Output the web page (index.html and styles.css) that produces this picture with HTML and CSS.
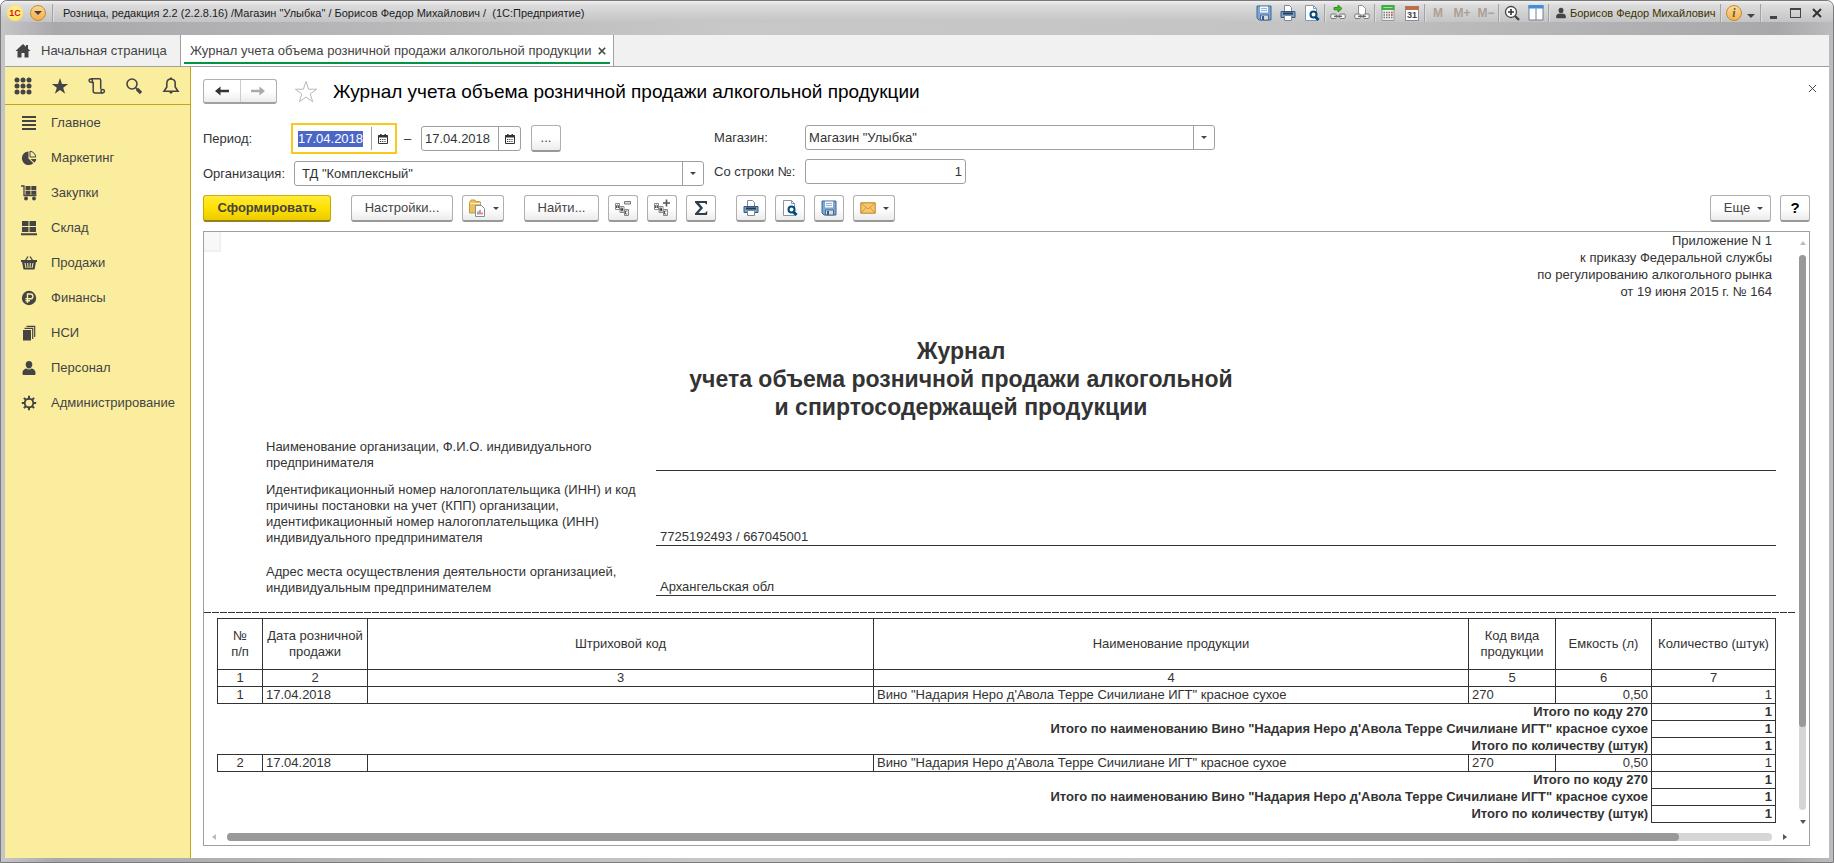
FILE: index.html
```html
<!DOCTYPE html>
<html lang="ru">
<head>
  <meta charset="UTF-8" />
  <meta name="viewport" content="width=device-width, initial-scale=1.0" />
  <title>Розница, редакция 2.2</title>
  <link rel="stylesheet" href="styles.css">
</head>
<body>
  <svg class="sprite" aria-hidden="true">
    <symbol id="i-save" viewBox="0 0 16 16">
      <path d="M1 1h14v14H3l-2-2z" fill="#7ba6d6" stroke="#41688f"/>
      <path d="M4 1.500h8v6H4z" fill="#f4f8fc"/>
      <path d="M5 3.500h6M5 5.500h6" stroke="#9ab4ce"/>
      <path d="M4.500 10h8v5h-8z" fill="#d9dcdf" stroke="#4a6a8c"/>
      <path d="M6 11h2v4H6z" fill="#2f5f92"/>
    </symbol>
    <symbol id="i-print" viewBox="0 0 16 16">
      <path d="M4.500 7V.5h5l2 2V7" fill="#fff" stroke="#7b8a9a"/>
      <path d="M1 6.500h14v6H1z" fill="#7fa3c8" stroke="#35587d"/>
      <path d="M3 8.500h10" stroke="#1d3d60" stroke-width="2"/>
      <path d="M4.500 10.500h7v5h-7z" fill="#fff" stroke="#7b8a9a"/>
    </symbol>
    <symbol id="i-preview" viewBox="0 0 16 16">
      <path d="M1.500.5h8l3 3v12h-11z" fill="#fff" stroke="#8796a5"/>
      <path d="M9.500.5v3h3" fill="none" stroke="#8796a5"/>
      <circle cx="9.500" cy="9.500" r="3" fill="#fff" stroke="#004b7c" stroke-width="2"/>
      <path d="M11.500 12l3 3" stroke="#004b7c" stroke-width="3"/>
    </symbol>
    <symbol id="i-link-in" viewBox="0 0 16 16">
      <path d="M4 2.500h4V0l4 3.500L8 7V4.800H4z" fill="#3fc01d" stroke="#1f7d12" stroke-width=".8"/>
      <rect x=".8" y="9" width="5.500" height="4.500" rx="1" fill="#f4f4f4" stroke="#777"/>
      <rect x="9.700" y="9" width="5.500" height="4.500" rx="1" fill="#f4f4f4" stroke="#777"/>
      <path d="M4 11.300h8" stroke="#666" stroke-width="1.300"/>
    </symbol>
    <symbol id="i-link" viewBox="0 0 16 16">
      <path d="M4.500 9V.5h4l3 3V9" fill="#fff" stroke="#8d8d8d"/>
      <rect x=".8" y="9" width="5.500" height="4.500" rx="1" fill="#f4f4f4" stroke="#777"/>
      <rect x="9.700" y="9" width="5.500" height="4.500" rx="1" fill="#f4f4f4" stroke="#777"/>
      <path d="M4 11.300h8" stroke="#666" stroke-width="1.300"/>
    </symbol>
    <symbol id="i-calc" viewBox="0 0 16 16">
      <path d="M2 .5h12v15H2z" fill="#eee" stroke="#999"/>
      <path d="M1.500 0h13v5h-13z" fill="#3fae49"/>
      <path d="M3.500 2.500h9" stroke="#9be09f"/>
      <path d="M3.500 7.500h9M3.500 10h9M3.500 12.500h9" stroke="#777" stroke-width="1.500" stroke-dasharray="1.500 1"/>
      <path d="M11 6.700h1.500v1.500H11zM11 9.200h1.500v1.500H11z" fill="#f04b4c"/>
    </symbol>
    <symbol id="i-zoom" viewBox="0 0 16 16">
      <circle cx="7" cy="7" r="5.500" fill="#fff" stroke="#444" stroke-width="1.300"/>
      <path d="M4 7h6M7 4v6" stroke="#333" stroke-width="1.600"/>
      <path d="M11 11l4 4" stroke="#444" stroke-width="2.400"/>
    </symbol>
    <symbol id="i-panels" viewBox="0 0 16 16">
      <path d="M1 .5h14v14.500H1z" fill="#fff" stroke="#6f7f90"/>
      <path d="M.5 0h15v3.500H.5z" fill="#3f8fdc"/>
      <path d="M8 3.500V15" stroke="#6f7f90"/>
    </symbol>
    <symbol id="i-user" viewBox="0 0 16 16">
      <path d="M8 1c2.200 0 3.300 1.500 3.300 3.500S10 8.500 8 8.500 4.700 6.500 4.700 4.500 5.800 1 8 1z"/>
      <path d="M5.500 8.500c1.500 1.300 3.500 1.300 5 0 2.500.6 4 1.800 4 4.300V14q0 1-1 1h-11q-1 0-1-1v-1.200c0-2.500 1.500-3.700 4-4.300z"/>
    </symbol>
    <symbol id="i-home" viewBox="0 0 16 16">
      <path d="M8 1L.5 8h2v6.500h4V10h3v4.500h4V8h2L13 5.700V2h-2v1.800z"/>
    </symbol>
    <symbol id="i-grid" viewBox="0 0 18 18">
      <circle cx="3" cy="3" r="2.500"/><circle cx="9" cy="3" r="2.500"/><circle cx="15" cy="3" r="2.500"/>
      <circle cx="3" cy="9" r="2.500"/><circle cx="9" cy="9" r="2.500"/><circle cx="15" cy="9" r="2.500"/>
      <circle cx="3" cy="15" r="2.500"/><circle cx="9" cy="15" r="2.500"/><circle cx="15" cy="15" r="2.500"/>
    </symbol>
    <symbol id="i-star" viewBox="0 0 18 18">
      <path d="M9 1l2 6h6.200l-5 3.700 1.900 6.100L9 13l-5.100 3.800 1.900-6.100-5-3.700H7z"/>
    </symbol>
    <symbol id="i-scroll" viewBox="0 0 18 18">
      <g fill="none" stroke="currentColor" stroke-width="1.500">
        <path d="M3 1.700h8.200q1.500 0 1.500 1.500v9"/>
        <path d="M3.500 5.500h1.700V14q0 2 2 2h7.500"/>
        <circle cx="2.800" cy="3.600" r="1.700"/><circle cx="14.700" cy="14.200" r="1.700"/>
      </g>
    </symbol>
    <symbol id="i-search" viewBox="0 0 18 18">
      <circle cx="7" cy="7" r="5" fill="none" stroke="currentColor" stroke-width="1.600"/>
      <path d="M10.500 10.500l2 2" stroke="currentColor" stroke-width="1.600"/>
      <path d="M12 12l4 4" stroke="currentColor" stroke-width="3.200"/>
    </symbol>
    <symbol id="i-bell" viewBox="0 0 18 18">
      <path d="M9 2c-3 0-4.200 2-4.200 4.500v3.500L2 14.200h14L13.200 10V6.500C13.200 4 12 2 9 2z" fill="none" stroke="currentColor" stroke-width="1.600"/>
      <path d="M8 .5h2v2H8zM7 15h4l-2 2z"/>
    </symbol>
    <symbol id="i-lines" viewBox="0 0 16 16">
      <path d="M1 1h14v2H1zM1 5h14v2H1zM1 9h14v2H1zM1 13h14v2H1z"/>
    </symbol>
    <symbol id="i-pie" viewBox="0 0 16 16">
      <path d="M7.500 1.500V8.500l4.800 4.800A6.800 6.800 0 1 1 7.500 1.500z"/>
      <path d="M9 1.300a6 6 0 0 1 5.700 5.700H9z" fill="none" stroke="currentColor"/>
      <path d="M9.500 9h5.800a6 6 0 0 1-2 3.800z"/>
    </symbol>
    <symbol id="i-cart" viewBox="0 0 16 16">
      <path d="M0 1h3v9.500h12.500" fill="none" stroke="currentColor" stroke-width="1.300"/>
      <path d="M4.500 1h5v4h-5zM10.300 1h5v4h-5zM4.500 5.800h5v4h-5zM10.300 5.800h5v4h-5z"/>
      <circle cx="5" cy="13.500" r="1.900"/><circle cx="13" cy="13.500" r="1.900"/>
    </symbol>
    <symbol id="i-stock" viewBox="0 0 16 16">
      <path d="M1 1h6.500v5H1zM8.500 1H15v5H8.500zM1 7h6.500v5H1zM8.500 7H15v5H8.500zM0 13.300h16v1.900H0z"/>
    </symbol>
    <symbol id="i-basket" viewBox="0 0 16 16">
      <path d="M4 6l3-4.500M12 6L9 1.500" stroke="currentColor" stroke-width="1.300"/>
      <path d="M0 5h16v2h-1l-1.500 7.500h-11L1 7H0z"/>
      <path d="M4 8l1 5M6.700 8l.3 5M9.300 8L9 13M12 8l-1 5" stroke="#fbed9e"/>
    </symbol>
    <symbol id="i-ruble" viewBox="0 0 16 16">
      <circle cx="8" cy="8" r="7.200"/>
      <path d="M6.500 13V4h3a2.300 2.300 0 0 1 0 4.800H4.500M4.500 10.800H9" fill="none" stroke="#fbed9e" stroke-width="1.400"/>
    </symbol>
    <symbol id="i-stack" viewBox="0 0 16 16">
      <path d="M2 5h8v10.500H2z"/>
      <path d="M3.500 3.300h8.200V14M5.500 1.300h8.200V12" fill="none" stroke="currentColor" stroke-width="1.200"/>
    </symbol>
    <symbol id="i-gear" viewBox="0 0 16 16">
      <circle cx="8" cy="8" r="4.300" fill="none" stroke="currentColor" stroke-width="1.900"/>
      <path d="M8 .8v3M8 12.200v3M.8 8h3M12.200 8h3M2.900 2.900L5 5M11 11l2.100 2.100M13.100 2.900L11 5M5 11l-2.100 2.100" stroke="currentColor" stroke-width="2"/>
    </symbol>
    <symbol id="i-left" viewBox="0 0 16 16">
      <path d="M1 8l5.500-4.500v3.200H15v2.600H6.500v3.200z"/>
    </symbol>
    <symbol id="i-right" viewBox="0 0 16 16">
      <path d="M15 8L9.500 3.500v3.200H1v2.600h8.500v3.200z"/>
    </symbol>
    <symbol id="i-fav" viewBox="0 0 24 24">
      <path d="M12 1.500l2.600 7.700h8.100l-6.500 4.800 2.500 7.800L12 17l-6.700 4.800L7.800 14 1.300 9.200h8.100z" fill="#fff" stroke="#b4b9c0"/>
    </symbol>
    <symbol id="i-date" viewBox="0 0 10 10">
      <path d="M.5 1.500h9v8h-9z" fill="none" stroke="currentColor"/>
      <path d="M.5 1h9v2.500h-9zM2 0h1.500v2H2zM6.500 0H8v2H6.500z"/>
      <path d="M2 5.500h6M2 7.500h6" stroke="currentColor" stroke-dasharray="1.200 1"/>
    </symbol>
    <symbol id="i-variant" viewBox="0 0 18 18">
      <path d="M1.500 3.500q0-1 1-1L3 1h4l.5 1.500h4q1 0 1 1V14h-11z" fill="#edc062" stroke="#c49a3c"/>
      <path d="M2 4.500h10" stroke="#fdeebb"/>
      <path d="M7.500 6.500h6l3 3v8h-9z" fill="#fff" stroke="#7e8fa0"/>
      <path d="M10 15.500v-3" stroke="#4a8a4a" stroke-width="1.300"/>
      <path d="M12 15.500v-4.500M14 15.500v-2" stroke="#d84a5c" stroke-width="1.300"/>
    </symbol>
    <symbol id="i-letters" viewBox="0 0 18 18">
      <path d="M1.500 4.500h4v6h-4zM6 7.500h4v6H6zM10.500 10.500h4v6h-4z" fill="#fff" stroke="#888"/>
      <path d="M2.500 9V6.500q1-1 2 0V9M2.500 8h2M7 9h1.500v3H7zM7 10.500h2M13.500 12h-2v3h2" fill="none" stroke="#333" stroke-width=".8"/>
    </symbol>
    <symbol id="i-fold" viewBox="0 0 18 18">
      <use href="#i-letters"/>
      <path d="M10.500 2.500h6v2.500h-6z" fill="#ddd" stroke="#777"/>
    </symbol>
    <symbol id="i-unfold" viewBox="0 0 18 18">
      <use href="#i-letters"/>
      <path d="M13.500.5v7M10 4h7" stroke="#555" stroke-width="1.600"/>
    </symbol>
    <symbol id="i-sum" viewBox="0 0 16 16">
      <path d="M2 1h12v3.200h-1.200q-.2-1.200-1.500-1.200H6l4 5-4.500 5h6q1.300 0 1.700-1.500h1.200L14 15H2v-1.500L7 8 2 2.500z" fill="#2d3e4c"/>
    </symbol>
    <symbol id="i-mail" viewBox="0 0 16 16">
      <path d="M.8 2.800h14.400v10.400H.8z" fill="#f6c76c" stroke="#c07f26"/>
      <path d="M1 3l7 6 7-6M1 13l5-5.500M15 13l-5-5.500" fill="none" stroke="#c88a32" stroke-width=".8"/>
    </symbol>
    <symbol id="i-close" viewBox="0 0 10 10">
      <path d="M1 1l8 8M9 1L1 9" fill="none" stroke="currentColor"/>
    </symbol>
  </svg>

  <div class="window">
    <header class="titlebar">
      <span class="logo">1С</span>
      <button class="menu-ball" aria-label="Главное меню"><i class="arrow"></i></button>
      <i class="sep"></i>
      <span class="caption">Розница, редакция 2.2 (2.2.8.16) /Магазин "Улыбка" / Борисов Федор Михайлович /&nbsp; (1С:Предприятие)</span>
      <div class="tools">
        <button class="tool" aria-label="Сохранить"><svg><use href="#i-save"/></svg></button>
        <button class="tool" aria-label="Печать"><svg><use href="#i-print"/></svg></button>
        <button class="tool" aria-label="Предварительный просмотр"><svg><use href="#i-preview"/></svg></button>
        <i class="sep"></i>
        <button class="tool" aria-label="Перейти по ссылке"><svg><use href="#i-link-in"/></svg></button>
        <button class="tool" aria-label="Получить ссылку"><svg><use href="#i-link"/></svg></button>
        <i class="sep"></i>
        <button class="tool" aria-label="Калькулятор"><svg><use href="#i-calc"/></svg></button>
        <button class="tool" aria-label="Календарь"><span class="calendar">31</span></button>
        <i class="sep"></i>
        <button class="tool memory">M</button>
        <button class="tool memory">M+</button>
        <button class="tool memory">M−</button>
        <i class="sep"></i>
        <button class="tool" aria-label="Масштаб"><svg><use href="#i-zoom"/></svg></button>
        <button class="tool" aria-label="Панели"><svg><use href="#i-panels"/></svg></button>
        <i class="sep"></i>
        <button class="user"><svg><use href="#i-user"/></svg>Борисов Федор Михайлович</button>
        <i class="sep"></i>
        <button class="tool" aria-label="Справка"><span class="info">i</span></button>
        <button class="tool-more" aria-label="Дополнительно"><i class="arrow"></i></button>
        <i class="sep"></i>
        <button class="win" aria-label="Свернуть"><i class="win-min"></i></button>
        <button class="win" aria-label="Развернуть"><i class="win-max"></i></button>
        <button class="win win-close" aria-label="Закрыть"><svg><use href="#i-close"/></svg></button>
      </div>
    </header>

    <nav class="tabs">
      <a class="tab home" href="#"><svg><use href="#i-home"/></svg>Начальная страница</a>
      <a class="tab active" href="#">Журнал учета объема розничной продажи алкогольной продукции<svg class="tab-close"><use href="#i-close"/></svg></a>
    </nav>

    <div class="body">
      <aside class="sidebar">
        <div class="quick">
          <button aria-label="Меню функций"><svg><use href="#i-grid"/></svg></button>
          <button aria-label="Избранное"><svg><use href="#i-star"/></svg></button>
          <button aria-label="История"><svg><use href="#i-scroll"/></svg></button>
          <button aria-label="Поиск"><svg><use href="#i-search"/></svg></button>
          <button aria-label="Оповещения"><svg><use href="#i-bell"/></svg></button>
        </div>
        <nav class="sections">
          <a href="#"><svg><use href="#i-lines"/></svg>Главное</a>
          <a href="#"><svg><use href="#i-pie"/></svg>Маркетинг</a>
          <a href="#"><svg><use href="#i-cart"/></svg>Закупки</a>
          <a href="#"><svg><use href="#i-stock"/></svg>Склад</a>
          <a href="#"><svg><use href="#i-basket"/></svg>Продажи</a>
          <a href="#"><svg><use href="#i-ruble"/></svg>Финансы</a>
          <a href="#"><svg><use href="#i-stack"/></svg>НСИ</a>
          <a href="#"><svg><use href="#i-user"/></svg>Персонал</a>
          <a href="#"><svg><use href="#i-gear"/></svg>Администрирование</a>
        </nav>
      </aside>

      <main class="main">
        <div class="page-head">
          <div class="history">
            <button aria-label="Назад"><svg><use href="#i-left"/></svg></button>
            <button class="off" aria-label="Вперед"><svg><use href="#i-right"/></svg></button>
          </div>
          <button class="fav" aria-label="В избранное"><svg><use href="#i-fav"/></svg></button>
          <h1>Журнал учета объема розничной продажи алкогольной продукции</h1>
          <button class="page-close" aria-label="Закрыть"><svg><use href="#i-close"/></svg></button>
        </div>

        <form class="filters" onsubmit="return false">
          <div class="filter-col left">
            <div class="filter">
              <label for="from">Период:</label>
              <div class="date focused">
                <input id="from" type="text" value="17.04.2018" onfocus="this.select()" autofocus>
                <button type="button" aria-label="Выбрать дату"><svg><use href="#i-date"/></svg></button>
              </div>
              <span class="dash">–</span>
              <div class="date">
                <input type="text" value="17.04.2018" aria-label="Конец периода">
                <button type="button" aria-label="Выбрать дату"><svg><use href="#i-date"/></svg></button>
              </div>
              <button type="button" class="btn dots">...</button>
            </div>
            <div class="filter">
              <label for="org">Организация:</label>
              <div class="combo">
                <select id="org"><option>ТД "Комплексный"</option></select>
              </div>
            </div>
          </div>
          <div class="filter-col right">
            <div class="filter">
              <label for="shop">Магазин:</label>
              <div class="combo">
                <select id="shop"><option>Магазин "Улыбка"</option></select>
              </div>
            </div>
            <div class="filter">
              <label for="line">Со строки №:</label>
              <input id="line" class="number" type="text" value="1">
            </div>
          </div>
        </form>

        <div class="toolbar">
          <button class="btn primary">Сформировать</button>
          <div class="group">
            <button class="btn settings">Настройки...</button>
            <button class="btn drop wide" aria-label="Варианты отчета"><svg><use href="#i-variant"/></svg><i class="arrow"></i></button>
          </div>
          <div class="group">
            <button class="btn find">Найти...</button>
            <button class="btn icon wide" aria-label="Свернуть группы"><svg><use href="#i-fold"/></svg></button>
            <button class="btn icon wide" aria-label="Развернуть группы"><svg><use href="#i-unfold"/></svg></button>
            <button class="btn icon" aria-label="Сумма"><svg><use href="#i-sum"/></svg></button>
          </div>
          <div class="group">
            <button class="btn icon" aria-label="Печать"><svg><use href="#i-print"/></svg></button>
            <button class="btn icon" aria-label="Просмотр"><svg><use href="#i-preview"/></svg></button>
            <button class="btn icon" aria-label="Сохранить"><svg><use href="#i-save"/></svg></button>
            <button class="btn drop" aria-label="Отправить"><svg><use href="#i-mail"/></svg><i class="arrow"></i></button>
          </div>
          <div class="group end">
            <button class="btn more">Еще<i class="arrow"></i></button>
            <button class="btn icon help">?</button>
          </div>
        </div>

        <div class="viewer">
          <div class="report">
            <i class="corner"></i>
            <p class="appendix">Приложение N 1<br>к приказу Федеральной службы<br>по регулированию алкогольного рынка<br>от 19 июня 2015 г. № 164</p>
            <h2>Журнал<br>учета объема розничной продажи алкогольной<br>и спиртосодержащей продукции</h2>

            <dl class="props">
              <dt>Наименование организации, Ф.И.О. индивидуального<br>предпринимателя</dt>
              <dd></dd>
              <dt>Идентификационный номер налогоплательщика (ИНН) и код<br>причины постановки на учет (КПП) организации,<br>идентификационный номер налогоплательщика (ИНН)<br>индивидуального предпринимателя</dt>
              <dd>7725192493 / 667045001</dd>
              <dt class="address">Адрес места осуществления деятельности организацией,<br>индивидуальным предпринимателем</dt>
              <dd>Архангельская обл</dd>
            </dl>

            <div class="page-break"></div>

            <table class="journal">
              <colgroup>
                <col class="c-num"><col class="c-date"><col class="c-code"><col class="c-name"><col class="c-kind"><col class="c-vol"><col class="c-qty">
              </colgroup>
              <thead>
                <tr class="names">
                  <th>№<br>п/п</th>
                  <th>Дата розничной<br>продажи</th>
                  <th>Штриховой код</th>
                  <th>Наименование продукции</th>
                  <th>Код вида<br>продукции</th>
                  <th>Емкость (л)</th>
                  <th>Количество (штук)</th>
                </tr>
                <tr><th>1</th><th>2</th><th>3</th><th>4</th><th>5</th><th>6</th><th>7</th></tr>
              </thead>
              <tbody>
                <tr>
                  <td class="mid">1</td><td>17.04.2018</td><td></td>
                  <td>Вино "Надария Неро д'Авола Терре Сичилиане ИГТ" красное сухое</td>
                  <td>270</td><td class="num">0,50</td><td class="num">1</td>
                </tr>
                <tr class="total"><td colspan="6">Итого по коду 270</td><td>1</td></tr>
                <tr class="total"><td colspan="6">Итого по наименованию Вино "Надария Неро д'Авола Терре Сичилиане ИГТ" красное сухое</td><td>1</td></tr>
                <tr class="total"><td colspan="6">Итого по количеству (штук)</td><td>1</td></tr>
                <tr>
                  <td class="mid">2</td><td>17.04.2018</td><td></td>
                  <td>Вино "Надария Неро д'Авола Терре Сичилиане ИГТ" красное сухое</td>
                  <td>270</td><td class="num">0,50</td><td class="num">1</td>
                </tr>
                <tr class="total"><td colspan="6">Итого по коду 270</td><td>1</td></tr>
                <tr class="total"><td colspan="6">Итого по наименованию Вино "Надария Неро д'Авола Терре Сичилиане ИГТ" красное сухое</td><td>1</td></tr>
                <tr class="total"><td colspan="6">Итого по количеству (штук)</td><td>1</td></tr>
              </tbody>
            </table>
          </div>
          <div class="scroll-y">
            <i class="tri up"></i>
            <div class="track"><div class="thumb"></div></div>
            <i class="tri down"></i>
          </div>
          <div class="scroll-x">
            <i class="tri prev"></i>
            <div class="track"><div class="thumb"></div></div>
            <i class="tri next"></i>
          </div>
        </div>
      </main>
    </div>
  </div>
</body>
</html>
```
FILE: styles.css
```css
* {
  box-sizing: border-box;
}

body {
  margin: 0;
  background: #fff;
  font: 13px/16px "Liberation Sans", Arial, sans-serif;
  color: #333;
}

button,
input,
select {
  font: inherit;
  color: inherit;
}

button {
  margin: 0;
  padding: 0;
  border: none;
  background: none;
  cursor: pointer;
}

a {
  color: inherit;
  text-decoration: none;
}

svg {
  display: block;
  flex: none;
  width: 16px;
  height: 16px;
  fill: currentColor;
}

.sprite {
  position: absolute;
  width: 0;
  height: 0;
}

.arrow {
  width: 0;
  height: 0;
  border: 3px solid transparent;
  border-top-color: #444;
  border-bottom: none;
}

/* window frame */
.window {
  min-height: 100vh;
  display: flex;
  flex-direction: column;
  padding: 0 4px 4px;
  border: 1px solid #7d7a7d;
  border-radius: 7px 7px 0 0;
  background: linear-gradient(90deg, #c6c6c7, #a9a9ac 3%, #c8c8c8 40%, #c4c4c4 70%, #a8a8ab 97%, #bcbcbe);
}

.titlebar {
  height: 34px;
  margin: 0 -4px;
  padding: 0 5px 10px 6px;
  display: flex;
  align-items: center;
  border-radius: 6px 6px 0 0;
  background: linear-gradient(#f0f0f0, #dcdcdc 20%, #c4c4c6) no-repeat;
  background-size: 100% 21px;
}

.logo {
  width: 16px;
  height: 16px;
  flex: none;
  border-radius: 50%;
  background: radial-gradient(circle at 50% 40%, #fff3a0, #ffe14a);
  color: #e0141c;
  font-size: 9px;
  font-weight: bold;
  text-align: center;
}

.menu-ball {
  width: 16px;
  height: 16px;
  flex: none;
  margin: 0 6px 0 7px;
  border: 1px solid #c98a2c;
  border-radius: 50%;
  background: linear-gradient(#fbd596, #f3b04a);
  display: flex;
  align-items: center;
  justify-content: center;
}

.menu-ball .arrow {
  border-width: 4px;
  border-bottom: none;
}

.sep {
  width: 2px;
  height: 18px;
  border-left: 1px solid #a3a3a3;
  border-right: 1px solid #dcdcdc;
}

.caption {
  margin-left: 9px;
  font-size: 11px;
  color: #1c1c1c;
  white-space: nowrap;
}

.tools {
  margin-left: auto;
  display: flex;
  align-items: center;
}

.tool {
  width: 24px;
  display: flex;
  justify-content: center;
}

.calendar {
  width: 14px;
  height: 15px;
  border: 1px solid #8c8c9a;
  border-top: 4px solid #b9714a;
  background: #fff;
  color: #444;
  font-size: 9px;
  line-height: 10px;
  font-weight: bold;
}

.memory {
  font-weight: bold;
  font-size: 12px;
  color: #ad9f97;
}

.user {
  width: 170px;
  padding-left: 5px;
  display: flex;
  align-items: center;
  gap: 3px;
  font-size: 11px;
  white-space: nowrap;
  color: #3c3000;
}

.user svg {
  width: 12px;
  height: 12px;
  color: #444;
}

.info {
  width: 16px;
  height: 16px;
  border: 1px solid #c98a2c;
  border-radius: 50%;
  background: linear-gradient(#fbd99a, #f2b350);
  color: #6d5a30;
  font: italic bold 12px/14px "Liberation Serif", serif;
  text-align: center;
}

.tool-more {
  width: 14px;
  height: 12px;
  padding: 5px 1px 0;
}

.tool-more .arrow {
  display: block;
  border-width: 4px;
  border-bottom: none;
}

.win {
  width: 22px;
  height: 16px;
  display: flex;
  align-items: center;
  justify-content: center;
  color: #333;
}

.win-min {
  width: 7px;
  height: 3px;
  margin-top: 8px;
  background: #444;
}

.win-max {
  width: 11px;
  height: 10px;
  border: 1px solid #444;
  border-top-width: 2px;
}

.win-close svg {
  width: 10px;
  height: 10px;
  stroke-width: 2;
}

/* open tabs */
.tabs {
  height: 32px;
  display: flex;
  background: #f1f1f1;
  border-bottom: 1px solid #a0a0a0;
}

.tab {
  display: flex;
  align-items: center;
  white-space: nowrap;
  color: #444;
}

.tab.home {
  width: 175px;
  padding-left: 10px;
  gap: 10px;
}

.tab.active {
  padding: 0 7px 0 9px;
  gap: 7px;
  background: linear-gradient(#009646, #009646) no-repeat 3px 27px / calc(100% - 6px) 2px #fff;
  border: 1px solid #a0a0a0;
  border-width: 0 1px;
}

.tab-close {
  width: 8px;
  height: 8px;
  stroke-width: 2;
}

.body {
  flex: 1;
  display: flex;
  background: #fff;
}

/* sections panel */
.sidebar {
  width: 186px;
  flex: none;
  background: #fbed9e;
  border-right: 1px solid #c4a61c;
  color: #444;
}

.quick {
  height: 38px;
  padding: 0 10px 0 9px;
  display: flex;
  align-items: center;
  justify-content: space-between;
  border-bottom: 1px solid #c4a61c;
}

.quick svg {
  width: 18px;
  height: 18px;
}

.sections a {
  height: 35px;
  padding-left: 16px;
  display: flex;
  align-items: center;
  gap: 14px;
}

/* page */
.main {
  flex: 1;
  min-width: 0;
  padding: 12px 19px 12px 12px;
  display: flex;
  flex-direction: column;
}

.page-head {
  height: 25px;
  display: flex;
  align-items: center;
}

.page-head h1 {
  margin: 0 0 0 15px;
  font-size: 19px;
  line-height: 24px;
  font-weight: normal;
  color: #000;
  white-space: nowrap;
}

.history {
  width: 74px;
  height: 25px;
  display: flex;
  border: 1px solid #b0b0b0;
  border-bottom: 2px solid #a0a0a0;
  border-radius: 3px;
  background: linear-gradient(#fff 50%, #ececec);
}

.history button {
  flex: 1;
  display: flex;
  align-items: center;
  justify-content: center;
}

.history .off {
  border-left: 1px solid #ccc;
  color: #aaa;
}

.fav {
  margin-left: 17px;
}

.fav svg {
  width: 24px;
  height: 24px;
}

.page-close {
  align-self: flex-start;
  margin: 5px -7px 0 auto;
}

.page-close svg {
  width: 9px;
  height: 9px;
}

.filters {
  margin-top: 21px;
  display: flex;
  gap: 10px;
}

.filter-col {
  display: flex;
  flex-direction: column;
  gap: 9px;
}

.filter-col.left {
  padding-top: 1px;
  gap: 10px;
}

.filter {
  height: 25px;
  display: flex;
  align-items: center;
}

.filter label {
  width: 91px;
  flex: none;
}

.date,
.combo,
.number {
  height: 25px;
  border: 1px solid #a0a0a0;
  border-radius: 3px;
  background: #fff;
}

.date {
  width: 100px;
  display: flex;
}

.date.focused {
  border-color: #fff;
  border-radius: 0;
  outline: 2px solid #fcc81c;
  outline-offset: 1px;
}

.date input {
  width: 77px;
  padding: 0 3px;
  border: none;
  border-right: 1px solid #a0a0a0;
  outline: none;
  background: none;
}

.date input::selection {
  background: #4a67c8;
  color: #fff;
}

.date button {
  flex: 1;
  display: flex;
  align-items: center;
  justify-content: center;
}

.date svg {
  width: 10px;
  height: 10px;
}

.dash {
  width: 27px;
  text-align: center;
}

.dots {
  width: 30px;
  margin-left: 10px;
}

.combo {
  width: 410px;
  position: relative;
}

.combo select {
  width: 100%;
  height: 100%;
  padding: 0 24px 0 3px;
  border: none;
  outline: none;
  appearance: none;
  background: linear-gradient(#a0a0a0, #a0a0a0) no-repeat right 20px top / 1px 100%;
}

.left .combo select {
  padding-left: 7px;
}

.combo::after {
  content: "";
  position: absolute;
  right: 7px;
  top: 10px;
  border: 3px solid transparent;
  border-top-color: #444;
  border-bottom: none;
  pointer-events: none;
}

.number {
  width: 161px;
  padding: 0 3px;
  text-align: right;
}

/* command bar */
.toolbar {
  margin: 9px 0;
  display: flex;
  gap: 20px;
}

.group {
  display: flex;
  gap: 9px;
}

.group.end {
  margin-left: auto;
}

.btn {
  height: 27px;
  display: flex;
  align-items: center;
  justify-content: center;
  border: 1px solid #b0b0b0;
  border-bottom: 2px solid #989898;
  border-radius: 3px;
  background: linear-gradient(#fff 50%, #ececec);
  white-space: nowrap;
  color: #444;
}

.btn.primary {
  width: 128px;
  border-color: #d0ad10 #c8a60a #96801c;
  background: linear-gradient(#ffea3a, #ffe100 50%, #eccb00);
  font-weight: bold;
}

.btn.settings {
  width: 102px;
}

.btn.find {
  width: 75px;
}

.btn.icon {
  width: 30px;
}

.btn.drop {
  width: 42px;
  gap: 7px;
}

.btn.wide svg {
  width: 18px;
  height: 18px;
}

.btn.more {
  width: 61px;
  padding-left: 6px;
  gap: 7px;
}

.btn.help {
  font-size: 15px;
  font-weight: bold;
  color: #000;
}

/* spreadsheet viewer */
.viewer {
  flex: 1;
  display: grid;
  grid-template-columns: 1fr 14px;
  grid-template-rows: 1fr 16px;
  border: 1px solid #a0a0a0;
}

.report {
  position: relative;
  min-width: 0;
  padding: 0 19px 0 13px;
  color: #333;
}

.corner {
  position: absolute;
  left: 0;
  top: 0;
  width: 17px;
  height: 20px;
  background: #f8f8f8;
  border: 2px solid #f0f0f0;
  border-width: 0 2px 2px 0;
}

.appendix {
  margin: 0;
  padding-right: 4px;
  line-height: 17px;
  text-align: right;
}

.report h2 {
  margin: 37px 0 18px;
  padding-right: 71px;
  font-size: 23px;
  line-height: 28px;
  text-align: center;
}

.props {
  margin: 0 0 16px 49px;
  display: grid;
  grid-template-columns: 390px 1fr;
}

.props dt {
  padding-bottom: 11px;
}

.props dt.address {
  padding: 7px 0 0;
}

.props dd {
  margin: 0 0 11px;
  padding-left: 4px;
  display: flex;
  align-items: flex-end;
  border-bottom: 1px solid #333;
}

.props dd:last-child {
  margin: 0;
}

.page-break {
  height: 1px;
  margin: 0 -19px 5px -13px;
  background: repeating-linear-gradient(90deg, #333 0 7px, transparent 7px 8px);
}

.journal {
  width: 100%;
  table-layout: fixed;
  border-collapse: collapse;
}

.c-num { width: 45px; }
.c-date { width: 105px; }
.c-code { width: 506px; }
.c-kind { width: 87px; }
.c-vol { width: 96px; }
.c-qty { width: 124px; }

.journal th,
.journal td {
  height: 17px;
  padding: 0 3px;
  border: 1px solid #333;
  font-weight: normal;
  white-space: nowrap;
}

.journal .names th {
  height: 51px;
  padding: 0;
}

.journal .mid {
  text-align: center;
}

.journal .num {
  text-align: right;
}

.journal .total td {
  font-weight: bold;
  text-align: right;
}

.journal .total td:first-child {
  border-width: 0 1px 0 0;
}

.track {
  flex: 1;
  border-radius: 4px;
  background: #d6d6d6;
}

.thumb {
  border-radius: 4px;
  background: #999;
}

.scroll-y {
  padding: 9px 3px 5px 4px;
  display: flex;
  flex-direction: column;
  align-items: center;
  gap: 10px;
}

.scroll-y .track {
  width: 7px;
}

.scroll-y .thumb {
  height: 85%;
}

.scroll-x {
  padding: 0 8px;
  display: flex;
  align-items: center;
  gap: 11px;
}

.scroll-x .track,
.scroll-x .thumb {
  height: 8px;
}

.scroll-x .thumb {
  width: 94%;
}

.tri {
  border: 3px solid transparent;
}

.tri.up {
  border-top: none;
  border-bottom: 4px solid #bbb;
}

.tri.down {
  border-bottom: none;
  border-top: 4px solid #555;
}

.tri.prev {
  border-left: none;
  border-right: 4px solid #bbb;
}

.tri.next {
  border-right: none;
  border-left: 4px solid #555;
}
```
